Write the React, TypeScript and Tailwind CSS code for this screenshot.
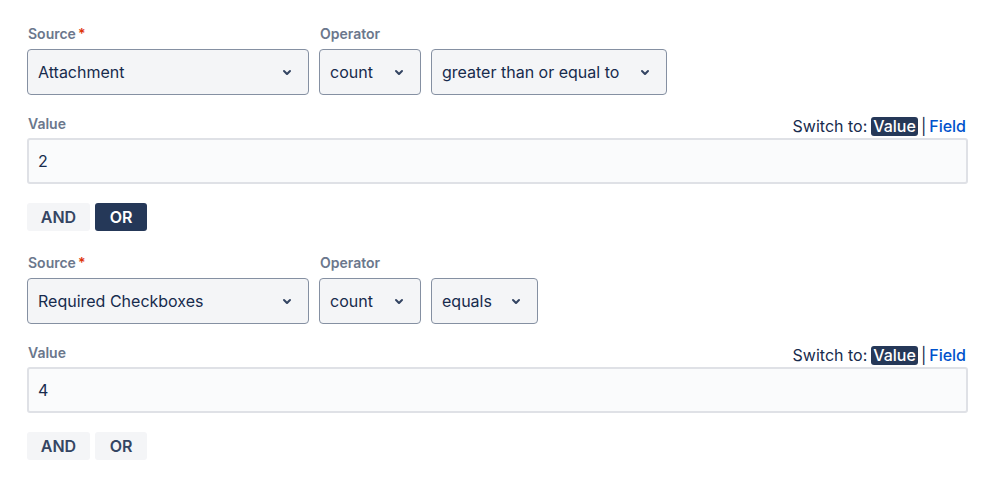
import React from "react";

const Chevron = () => (
  <svg width="24" height="24" viewBox="0 0 24 24" className="shrink-0">
    <path
      fill="#344563"
      d="M8.292 10.293a1.009 1.009 0 000 1.419l2.939 2.965c.218.215.5.322.779.322s.556-.107.769-.322l2.93-2.955a1.01 1.01 0 000-1.419.987.987 0 00-1.406 0l-2.298 2.317-2.307-2.327a.99.99 0 00-1.406 0z"
    />
  </svg>
);

const Select = ({ text, w }: { text: string; w: string }) => (
  <div
    className={`${w} h-[46px] flex items-center justify-between pl-[10px] pr-[9px] bg-[#f4f5f7] border border-[#8590a2] rounded-[4px] text-[16px] text-[#172b4d]`}
  >
    <span>{text}</span>
    <Chevron />
  </div>
);

const Group = ({
  source,
  opWidth,
  op2,
  op2Width,
  value,
  orActive,
}: {
  source: string;
  opWidth: string;
  op2: string;
  op2Width: string;
  value: string;
  orActive: boolean;
}) => (
  <div className="flex flex-col">
    <div className="flex gap-[10px]">
      <div className="flex flex-col gap-[5px]">
        <div className="h-[20px] leading-[20px] text-[14px] font-semibold text-[#6b778c] pl-[1px]">
          Source<span className="text-[#de350b] ml-[2px]">*</span>
        </div>
        <Select text={source} w="w-[282px]" />
      </div>
      <div className="flex flex-col gap-[5px]">
        <div className="h-[20px] leading-[20px] text-[14px] font-semibold text-[#6b778c] pl-[1px]">
          Operator
        </div>
        <div className="flex gap-[10px]">
          <Select text="count" w={opWidth} />
          <Select text={op2} w={op2Width} />
        </div>
      </div>
    </div>
    <div className="flex items-end justify-between mt-[19px] h-[20px]">
      <div className="leading-[20px] text-[14px] font-semibold text-[#6b778c] pl-[1px]">Value</div>
      <div className="flex items-center text-[16px] text-[#172b4d] leading-[20px] mr-[2px] translate-y-[2px]">
        <span>Switch to:</span>
        <span className="ml-[4px] px-[2px] bg-[#253858] text-white rounded-[3px] font-medium h-[19px] leading-[19px]">
          Value
        </span>
        <span className="mx-[3px] text-[#172b4d]">|</span>
        <span className="text-[#0052cc] font-medium">Field</span>
      </div>
    </div>
    <div className="mt-[4px] h-[46px] w-full flex items-center px-[9px] bg-[#fafbfc] border-2 border-[#dfe1e6] rounded-[3px] text-[16px] text-[#172b4d]">
      {value}
    </div>
    <div className="flex gap-[5px] mt-[19px]">
      <div className="w-[63px] h-[28px] flex items-center justify-center rounded-[3px] bg-[#f4f5f7] text-[#344563] text-[16px] font-semibold">
        AND
      </div>
      <div
        className={`w-[52px] h-[28px] flex items-center justify-center rounded-[3px] text-[16px] font-semibold ${
          orActive ? "bg-[#253858] text-white" : "bg-[#f4f5f7] text-[#344563]"
        }`}
      >
        OR
      </div>
    </div>
  </div>
);

export default function App() {
  return (
    <div
      className="w-[999px] h-[486px] bg-white pl-[27px] pr-[31px] pt-[24px] flex flex-col gap-[22px]"
      style={{ fontFamily: "Inter, 'Noto Sans', sans-serif" }}
    >
      <Group
        source="Attachment"
        opWidth="w-[102px]"
        op2="greater than or equal to"
        op2Width="w-[236px]"
        value="2"
        orActive={true}
      />
      <Group
        source="Required Checkboxes"
        opWidth="w-[102px]"
        op2="equals"
        op2Width="w-[107px]"
        value="4"
        orActive={false}
      />
    </div>
  );
}
